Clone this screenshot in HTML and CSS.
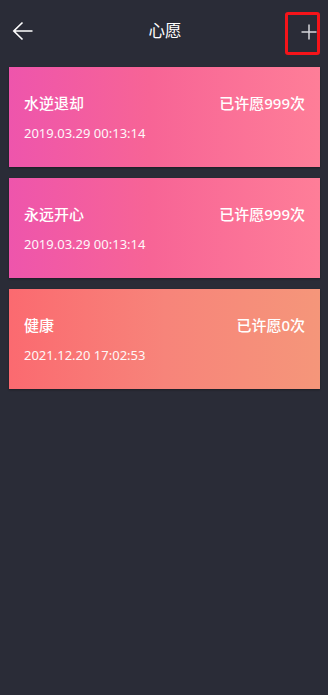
FILE: index.html
```html
<!DOCTYPE html>
<html lang="zh">
<head>
<meta charset="utf-8">
<link rel="stylesheet" href="styles.css">
</head>
<body>
<div class="app">
  <header class="topbar">
    <button class="back" aria-label="返回">
      <svg width="22" height="20" viewBox="0 0 22 20"><path d="M20.5 10H1.8M10.5 1.5L1.8 10l8.7 8.5" fill="none" stroke="#fff" stroke-width="1.6"/></svg>
    </button>
    <h1 class="title">心愿</h1>
    <button class="add" aria-label="添加">
      <svg width="16" height="16" viewBox="0 0 16 16"><path d="M8 0.5v15M0.5 8h15" fill="none" stroke="#d6d6dc" stroke-width="1.5"/></svg>
    </button>
    <div class="highlight"></div>
  </header>
  <main class="list">
    <div class="card pink">
      <div class="row"><span class="name">水逆退却</span><span class="count">已许愿999次</span></div>
      <div class="date">2019.03.29 00:13:14</div>
    </div>
    <div class="card pink">
      <div class="row"><span class="name">永远开心</span><span class="count">已许愿999次</span></div>
      <div class="date">2019.03.29 00:13:14</div>
    </div>
    <div class="card coral">
      <div class="row"><span class="name">健康</span><span class="count">已许愿0次</span></div>
      <div class="date">2021.12.20 17:02:53</div>
    </div>
  </main>
</div>
</body>
</html>
```

FILE: styles.css
```css
html, body {
  margin: 0;
  padding: 0;
  background: #2a2c37;
}
body {
  font-family: "Noto Sans", "Noto Sans CJK SC", sans-serif;
  color: #fff;
  width: 328px;
  height: 695px;
  overflow: hidden;
}
.app {
  display: flex;
  flex-direction: column;
}
.topbar {
  position: relative;
  height: 67px;
  display: flex;
  align-items: flex-start;
  justify-content: space-between;
  padding: 0 11px 0 12px;
  box-sizing: border-box;
}
.back, .add {
  background: none;
  border: 0;
  padding: 0;
  margin-top: 21px;
  display: flex;
}
.add { margin-top: 24px; }
.title {
  margin: 21px 0 0 -5px;
  font-size: 16.5px;
  font-weight: 400;
  line-height: 20px;
}
.highlight {
  position: absolute;
  left: 285px;
  top: 12px;
  width: 35px;
  height: 43px;
  box-sizing: border-box;
  border: 3px solid #f5141a;
  border-radius: 3px;
}
.list {
  display: flex;
  flex-direction: column;
  gap: 11px;
  padding: 0 8px 0 9px;
}
.card {
  height: 100px;
  box-sizing: border-box;
  padding: 24px 15px 0 15px;
  box-shadow: 0 1px 2px rgba(0,0,0,0.35);
}
.pink {
  background: linear-gradient(90deg, #ee55ac 0%, #f76496 45%, #fe7e98 100%);
}
.coral {
  background: linear-gradient(90deg, #fb6a70 0%, #f7847a 50%, #f5967a 100%);
}
.row {
  display: flex;
  justify-content: space-between;
  align-items: center;
  height: 22px;
}
.name, .count {
  font-size: 15px;
  font-weight: 500;
}
.date {
  margin-top: 12px;
  font-size: 13px;
  line-height: 16px;
  opacity: 0.95;
}
```
